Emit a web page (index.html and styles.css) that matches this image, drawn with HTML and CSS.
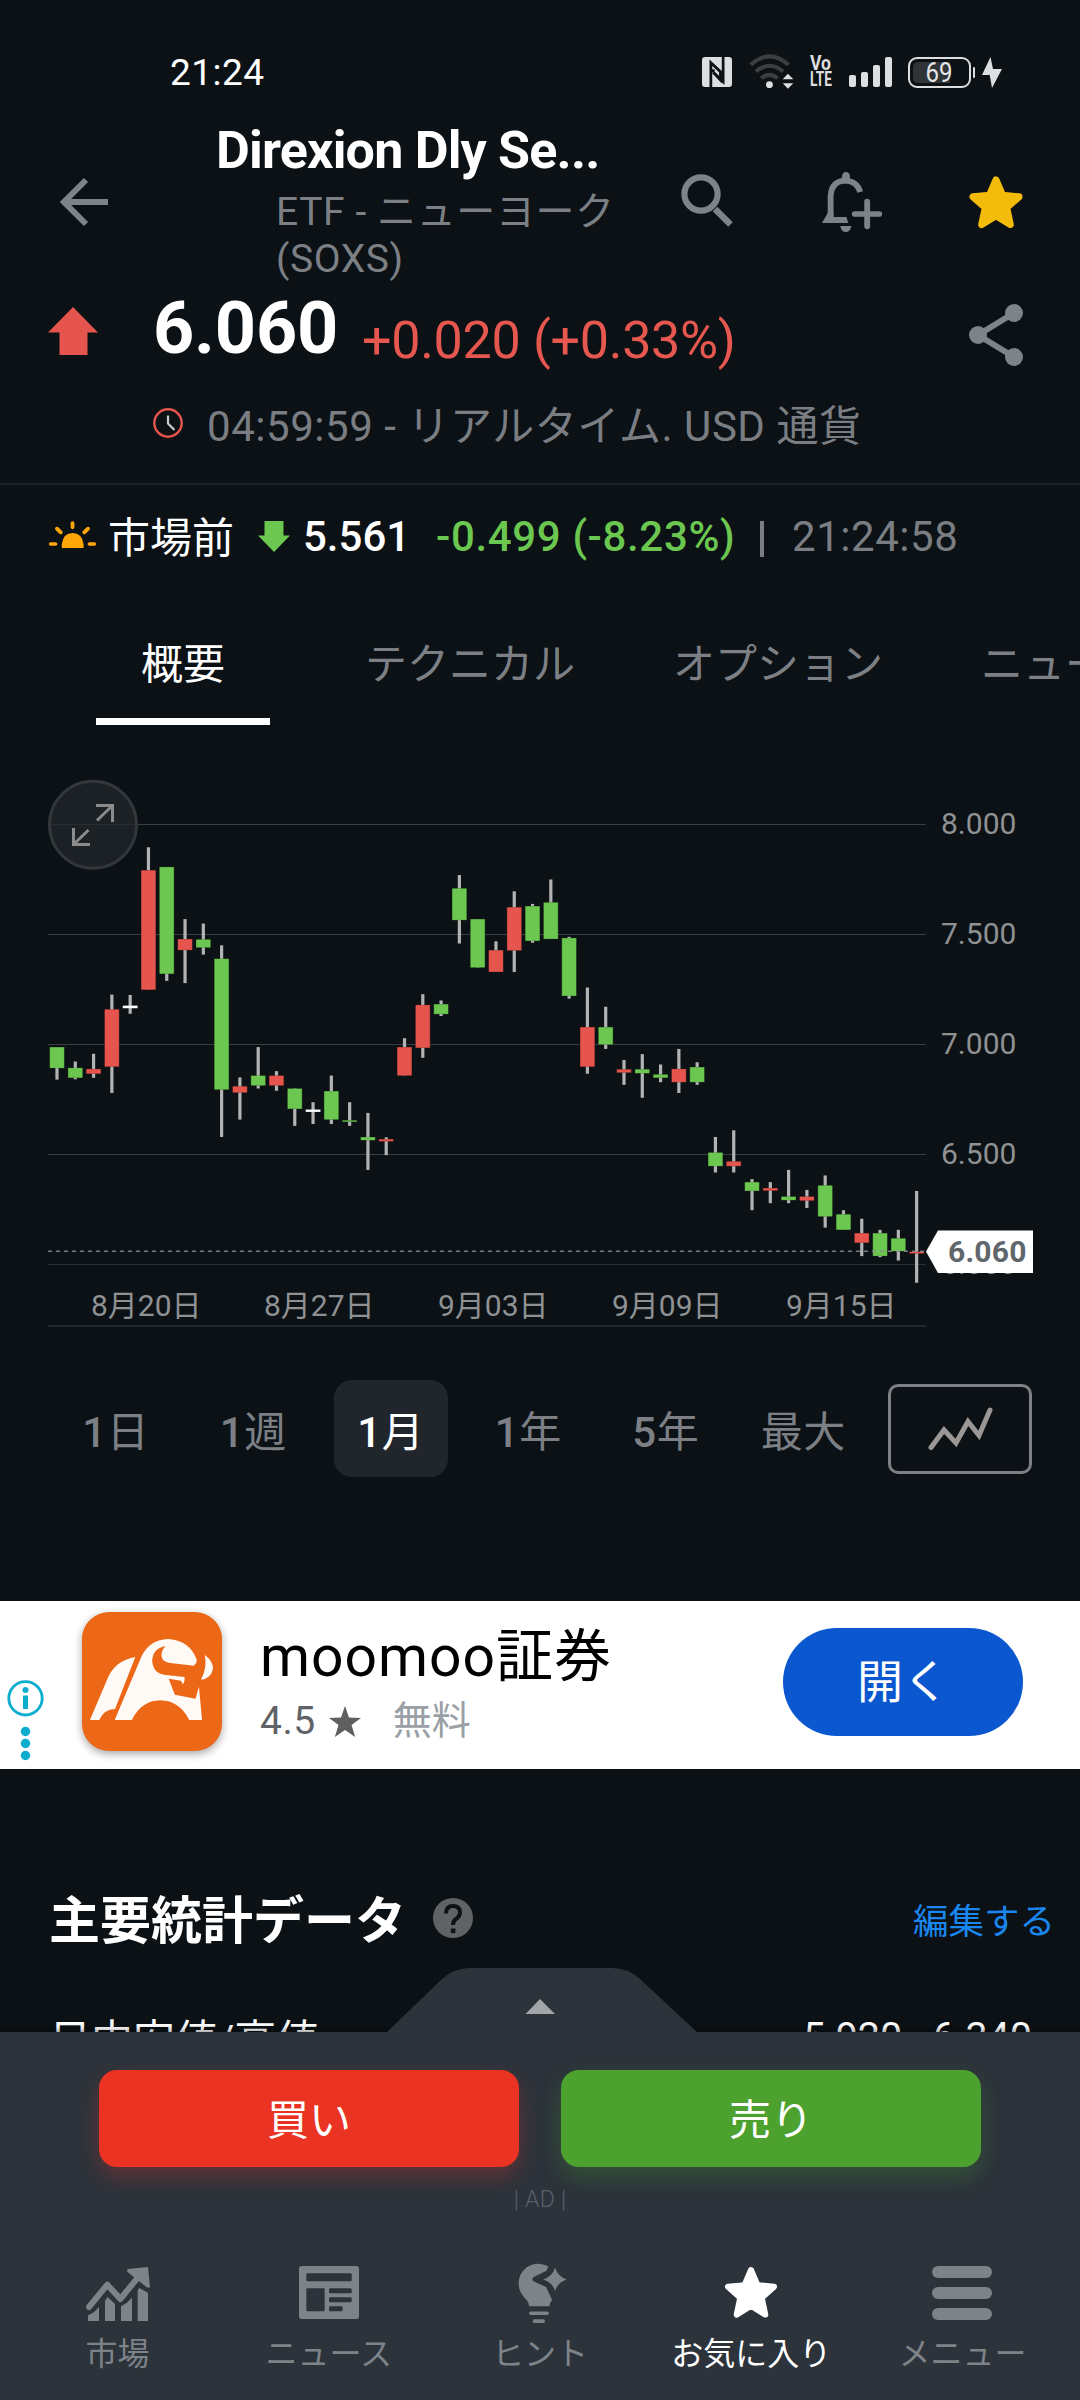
FILE: index.html
```html
<!DOCTYPE html>
<html lang="ja">
<head>
<meta charset="utf-8">
<title>SOXS</title>
<link rel="stylesheet" href="styles.css">
</head>
<body>
<main class="screen">
  <div class="status">
    <span class="clock">21:24</span>
    <div class="status-icons">
      <svg class="nfc" viewBox="470 81 88 90" preserveAspectRatio="none"><rect x="470" y="81" width="88" height="90" rx="9" fill="#dcdedf"/><path d="M496 171V98L524 125V150L503 127M503 127V118M532 81V155L504 127" fill="none" stroke="#0b1115" stroke-width="8"/></svg>
      <svg class="wifi" viewBox="606 72 132 104" preserveAspectRatio="none"><g fill="none" stroke="#3b3e40" stroke-width="12"><path d="M611 104Q666 54 722 104"/><path d="M626 124Q666 90 706 124"/><path d="M642 144Q666 124 690 144"/></g><ellipse cx="666" cy="163" rx="10" ry="10" fill="#dcdedf"/><path d="M705 147L720 131L736 147ZM705 159H736L720 175Z" fill="#dcdedf"/></svg>
      <svg class="volte" viewBox="0 0 23 32"><text x="0" y="14.500" textLength="21" lengthAdjust="spacingAndGlyphs">Vo</text><text x="0" y="31" textLength="22" lengthAdjust="spacingAndGlyphs">LTE</text></svg>
      <svg class="signal" viewBox="0 0 43 30"><g fill="#dcdedf"><rect y="18" width="7" height="12" rx="2"/><rect x="12" y="15" width="7" height="15" rx="2"/><rect x="24" y="8" width="7" height="22" rx="2"/><rect x="36" width="7" height="30" rx="2"/></g></svg>
      <svg class="battery" viewBox="0 0 67 31"><rect x="1" y="1" width="61" height="29" rx="8" fill="none" stroke="#dcdedf" stroke-width="2"/><path d="M10 5H42V26H10Q5 26 5 20V11Q5 5 10 5Z" fill="#303436"/><rect x="65" y="10" width="2" height="11" rx="1" fill="#dcdedf"/><text x="17.500" y="25" textLength="27" lengthAdjust="spacingAndGlyphs">69</text></svg>
      <svg class="bolt" viewBox="0 0 20 31"><path d="M8.500 0L0 18H7.500V17L10 31L20 12H11Z" fill="#dcdedf"/></svg>
    </div>
  </div>

  <header class="header">
    <svg class="back" viewBox="0 0 48 48"><path d="M48 24H5M26 2L4 24L26 46" fill="none" stroke="#7d8389" stroke-width="6"/></svg>
    <div class="titles">
      <h1>Direxion Dly Se...</h1>
      <p>ETF - ニューヨーク<br>(SOXS)</p>
    </div>
    <svg class="search" viewBox="0 0 53 53"><circle cx="20" cy="20" r="16.600" fill="none" stroke="#7d8389" stroke-width="6.200"/><path d="M34 35L49.500 50.500" stroke="#7d8389" stroke-width="6.500"/></svg>
    <svg class="bell" viewBox="819 426 174 180" preserveAspectRatio="none"><path d="M844 570V500Q846 452 888 452Q920 454 930 486" fill="none" stroke="#7d8389" stroke-width="17"/><path d="M877 448V438Q879 426 888 426Q899 427 900 438V448ZM836 548L819 579H895L890 561H852V548ZM872 588H904Q901 606 888 606Q875 606 872 588Z" fill="#7d8389"/><path d="M950 515V589M914 552H985" stroke="#7d8389" stroke-width="17" stroke-linecap="round"/></svg>
    <svg class="fav" viewBox="0 0 54 53"><path d="M27 4L33.500 19.200L50 20.800L37.700 31.700L41.300 48.600L27 39.800L12.700 48.600L16.300 31.700L4 20.800L20.500 19.200Z" fill="#f3bc0b" stroke="#f3bc0b" stroke-width="7" stroke-linejoin="round"/></svg>
  </header>

  <section class="quote">
    <svg class="up" viewBox="0 0 50 48"><path d="M25 0L50 25.500H39.500V48H11.500V25.500H0Z" fill="#e5544d"/></svg>
    <span class="price">6.060</span>
    <span class="change">+0.020 (+0.33%)</span>
    <svg class="share" viewBox="0 0 54 62"><path d="M45 9L9 31L45 53" fill="none" stroke="#7d8389" stroke-width="6"/><g fill="#7d8389"><circle cx="45" cy="9" r="9"/><circle cx="9" cy="31" r="9"/><circle cx="45" cy="53" r="9"/></g></svg>
  </section>
  <div class="timing">
    <svg viewBox="0 0 30 30"><circle cx="15" cy="15" r="13.700" fill="none" stroke="#e5544d" stroke-width="2.400"/><path d="M15 7.500V15.500L21.500 22" fill="none" stroke="#c8cacb" stroke-width="2.200"/></svg>
    <span>04:59:59 - リアルタイム. USD 通貨</span>
  </div>

  <div class="premarket">
    <svg class="sun" viewBox="143 723 136 81" preserveAspectRatio="none"><path d="M180 804V793Q184 759 211 759Q240 760 243 793V804Z" fill="#ffa708"/><path d="M211 729V742M166 746L177 757M256 746L245 757M148 792H162M260 792H274" stroke="#ffa708" stroke-width="11" stroke-linecap="round"/></svg>
    <span class="pm-label">市場前</span>
    <svg class="down" viewBox="0 0 32 31"><path d="M6.500 0H25.500V14.500H32L16 31L0 14.500H6.500Z" fill="#6cc750"/></svg>
    <span class="pm-price">5.561</span>
    <span class="pm-change">-0.499 (-8.23%)</span>
    <i class="pm-bar"></i>
    <span class="pm-time">21:24:58</span>
  </div>

  <nav class="tabs"><a class="on">概要</a><a>テクニカル</a><a>オプション</a><a>ニュース</a></nav>

  <svg class="chart" id="chart" viewBox="0 770 1080 570">
    <g id="grid"></g>
    <g class="axis">
      <text x="941" y="833.500">8.000</text><text x="941" y="943.500">7.500</text><text x="941" y="1053.500">7.000</text><text x="941" y="1164">6.500</text><text x="941" y="1273.800">6.000</text>
      <text x="91" y="1316">8月20日</text><text x="264" y="1316">8月27日</text><text x="438" y="1316">9月03日</text><text x="612" y="1316">9月09日</text><text x="786" y="1316">9月15日</text>
    </g>
    <g id="candles"></g>
    <path d="M48 1251.300H926" stroke="#8b9094" stroke-opacity=".85" stroke-width="1.600" stroke-dasharray="4 4"/>
    <path d="M926 1251.500L938 1230.500H1033V1273H938Z" fill="#fff"/>
    <text class="tag" x="948" y="1262">6.060</text>
    <circle cx="93" cy="824.700" r="43.500" fill="#24282c" fill-opacity=".7" stroke="#32373b" stroke-width="3"/>
    <path d="M96 805.500H112.500V822M112 806L97 820.500M73.500 828V844.500H90M74 844L88.500 830" fill="none" stroke="#8b8b8b" stroke-width="3"/>
  </svg>

  <div class="periods">
    <a><b>1</b>日</a><a><b>1</b>週</a><a class="on"><b>1</b>月</a><a><b>1</b>年</a><a><b>5</b>年</a><a>最大</a>
    <button class="kind"><svg viewBox="0 0 66 46"><path d="M4 41.500L17 24L29 37L41 15.500L52 29.500L63 4" fill="none" stroke="#9a9796" stroke-width="5" stroke-linecap="round"/></svg></button>
  </div>

  <section class="ad">
    <svg class="adinfo" viewBox="0 0 37 84"><circle cx="18.500" cy="18.300" r="16.700" fill="none" stroke="#0badcf" stroke-width="2.800"/><g fill="#0badcf"><circle cx="18.500" cy="10" r="3"/><rect x="16" y="15.500" width="5" height="13.500"/><circle cx="18.500" cy="51.500" r="4.700"/><circle cx="18.500" cy="63.500" r="4.700"/><circle cx="18.500" cy="75.500" r="4.700"/></g></svg>
    <svg class="logo" viewBox="238 96 407 417" preserveAspectRatio="none"><rect x="238" y="96" width="407" height="417" rx="80" fill="#ec6716"/><g fill="#fffaf5"><path d="M261 420L309 304Q330 242 393 231L334 387Q301 388 288 420Z"/><path d="M333 420L405 244Q428 178 490 177Q552 182 572 240Q568 262 552 256L500 250Q471 248 469 228Q469 210 481 198Q443 206 442 243Q445 282 482 285L536 291Q538 304 531 313L526 302L490 296L508 344L568 356L578 320L587 420H550Q521 362 466 361Q410 362 383 420Z"/><path d="M595 225Q618 242 619 265Q614 297 584 299Q603 262 595 225Z"/></g></svg>
    <div class="adtext">
      <strong>moomoo証券</strong>
      <p><span>4.5</span><svg viewBox="0 0 32 31"><path d="M16 0L20 11.500L32 12L22.500 19L26.200 31L16 24L5.800 31L9.500 19L0 12L12 11.500Z" fill="#5f5f5f"/></svg><em>無料</em></p>
    </div>
    <button class="open">開く</button>
  </section>

  <section class="stats">
    <div class="stats-head">
      <h2>主要統計データ</h2>
      <svg viewBox="0 0 40 40"><circle cx="20" cy="20" r="20" fill="#5f6366"/><path d="M13 15.500Q13 8 20 8Q27 8 27 14.500Q27 18.500 23 21Q20 23 20 27" fill="none" stroke="#0c1216" stroke-width="4"/><rect x="17.800" y="30.500" width="4.600" height="4.600" fill="#0c1216"/></svg>
      <a>編集する</a>
    </div>
    <div class="stats-row"><span>日中安値/高値</span><b>5.920 - 6.340</b></div>
  </section>

  <footer class="dock">
    <svg class="handle" viewBox="0 0 316 66"><path d="M0 66L3 64L58 11Q70 0 86 0H228Q244 0 256 11L313 64L316 66Z" fill="#2c333b"/><path d="M141.500 46L156 31L171 46Z" fill="#a2a6a9"/></svg>
    <div class="trade"><button class="buy">買い</button><button class="sell">売り</button></div>
    <div class="adlabel">| AD |</div>
    <nav class="bottom">
      <a><span class="ico"><svg width="66" height="56" viewBox="45 45 198 168"><g fill="#7d8389"><path d="M54 210V193Q72 186 87 168V210ZM105 210V149L113 138L135 159V210ZM153 210V166Q172 157 186 140V210ZM203 210V118L208 111L234 125V210Z"/><path d="M57 168L112 101L151 144L205 78" fill="none" stroke="#7d8389" stroke-width="18" stroke-linecap="round" stroke-linejoin="round"/><path d="M172 54L234 48L240 109L232 110L172 62Z"/></g></svg></span>市場</a>
      <a><span class="ico"><svg width="60" height="53" viewBox="687 50 180 159"><rect x="687" y="50" width="180" height="159" rx="8" fill="#7d8389"/><g fill="#2c333b"><rect x="709" y="72" width="136" height="24" rx="3"/><rect x="709" y="117" width="55" height="69" rx="3"/><rect x="777" y="117" width="68" height="15" rx="4"/><rect x="777" y="144" width="68" height="15" rx="4"/><rect x="777" y="171" width="41" height="15" rx="4"/></g></svg></span>ニュース</a>
      <a><span class="ico hint"><svg width="49" height="61" viewBox="1345 37 148 183"><path d="M1437 46Q1400 29 1370 50Q1340 76 1349 114Q1354 131 1371 148Q1378 155 1378 167H1440Q1440 157 1448 148L1430 109L1393 92Q1383 86 1394 78L1431 60ZM1457 50Q1465 77 1492 86Q1465 95 1457 121Q1449 95 1421 86Q1449 77 1457 50Z" fill="#7d8389"/><path d="M1384 188H1433M1395 212H1421" stroke="#7d8389" stroke-width="11" stroke-linecap="round"/></svg></span>ヒント</a>
      <a class="on"><span class="ico"><svg width="54" height="53" viewBox="0 0 54 53"><path d="M27 4L33.500 19.200L50 20.800L37.700 31.700L41.300 48.600L27 39.800L12.700 48.600L16.300 31.700L4 20.800L20.500 19.200Z" fill="#fff" stroke="#fff" stroke-width="6" stroke-linejoin="round"/></svg></span>お気に入り</a>
      <a><span class="ico"><svg width="60" height="54" viewBox="0 0 60 54"><g fill="#7d8389"><rect width="60" height="12" rx="6"/><rect y="21" width="60" height="12" rx="6"/><rect y="42" width="60" height="12" rx="6"/></g></svg></span>メニュー</a>
    </nav>
  </footer>
</main>
<script src="chart.js"></script>
</body>
</html>
```
FILE: styles.css
```css
* { box-sizing: border-box; }
body { margin: 0; background: #0b1115; }
.screen {
  position: relative;
  width: 1080px;
  height: 2400px;
  overflow: hidden;
  background: #0b1115;
  color: #fff;
  font-family: Roboto, "Noto Sans CJK JP", sans-serif;
  font-size: 42px;
}
svg { display: block; flex: none; overflow: visible; }
h1, h2, p { margin: 0; }
button { border: 0; padding: 0; color: #fff; font: inherit; }

.status { display: flex; height: 121px; padding: 54px 78px 0 170px; justify-content: space-between; }
.clock { font-size: 37px; line-height: 38px; letter-spacing: .5px; }
.status-icons { display: flex; height: 34px; align-items: center; }
.nfc { width: 30px; height: 30px; margin: 2px 17px 0 0; }
.wifi { width: 45px; height: 35px; margin-right: 16px; }
.volte { width: 23px; height: 32px; margin: 0 16px 0 0; fill: #dcdedf; font-size: 20px; font-weight: 700; }
.signal { width: 43px; height: 30px; margin: 2px 16px 0 0; }
.battery { width: 67px; height: 31px; margin: 2px 7px 0 0; fill: #e4e5e6; font-size: 27px; }
.bolt { width: 20px; height: 31px; margin-top: 2px; }

.header { display: flex; height: 164px; padding: 0 57px 0 60px; }
.back { width: 48px; height: 48px; margin: 57px 108px 0 0; }
.titles { width: 465px; }
.titles h1 { font-size: 52px; line-height: 60px; font-weight: 700; letter-spacing: -.8px; white-space: nowrap; }
.titles p { margin: 8px 0 0 60px; color: #7c8085; font-size: 39px; line-height: 47px; letter-spacing: .6px; white-space: nowrap; }
.search { width: 53px; height: 53px; margin: 53px 88px 0 0; }
.bell { width: 60px; height: 60px; margin: 51px 87px 0 0; }
.fav { width: 54px; height: 53px; margin-top: 55px; }

.quote { display: flex; height: 101px; padding: 0 57px 0 48px; }
.up { width: 50px; height: 48px; margin: 22px 55px 0 0; }
.price { width: 209px; font-size: 72px; font-weight: 700; line-height: 88px; letter-spacing: -.2px; }
.change { flex: 1; margin-top: 12px; color: #e5574f; font-size: 52px; line-height: 88px; letter-spacing: -.28px; white-space: nowrap; }
.share { width: 54px; height: 62px; margin-top: 19px; }
.timing { display: flex; height: 99px; padding: 22px 0 0 153px; color: #7a7e83; line-height: 37px; letter-spacing: .55px; border-bottom: 2px solid #1d2226; white-space: nowrap; }
.timing svg { width: 30px; height: 30px; margin-right: 24px; }

.premarket { display: flex; height: 135px; padding-left: 49px; line-height: 104px; white-space: nowrap; }
.sun { width: 47px; height: 27px; margin: 36px 12px 0 0; }
.pm-label { width: 150px; margin-top: 2px; }
.down { width: 32px; height: 31px; margin: 36px 13px 0 0; }
.pm-price { width: 133px; font-weight: 500; }
.pm-change { width: 324px; font-weight: 500; letter-spacing: .65px; color: #6cc750; }
.pm-bar { width: 4px; height: 36px; margin: 36px 28px 0 0; background: #7a7e83; }
.pm-time { color: #7a7e83; letter-spacing: .55px; }

.tabs { display: flex; height: 150px; padding-left: 96px; overflow: hidden; color: #7c8085; white-space: nowrap; }
.tabs a { flex: none; height: 105px; margin-right: 98px; line-height: 90px; }
.tabs .on { width: 174px; margin-right: 95px; border-bottom: 7px solid #fff; color: #fff; text-align: center; }

.chart { width: 1080px; height: 570px; }
.axis { fill: #8f9193; font-size: 30px; }
.tag { fill: #5f666c; font-size: 30px; font-weight: 700; letter-spacing: .2px; }

.periods { display: flex; height: 261px; padding: 40px 48px 0 47px; color: #7c8085; }
.periods a { height: 97px; margin: 0 12px; flex: 0 0 113.500px; border-radius: 18px; text-align: center; line-height: 106px; letter-spacing: .5px; }
.periods b { font-weight: 500; }
.periods .on { background: #20262c; color: #fff; }
.kind { display: flex; width: 144px; height: 90px; margin: 4px 0 0 auto; border: 3px solid #7d8185; border-radius: 10px; background: none; align-items: center; justify-content: center; }
.kind svg { width: 66px; height: 46px; }

.ad { display: flex; height: 168px; background: #fff; padding: 0 57px 0 7px; }
.adinfo { width: 37px; height: 84px; margin: 79px 38px 0 0; }
.logo { width: 140px; height: 139px; margin: 11px 38px 0 0; filter: drop-shadow(0 3px 4px rgba(0,0,0,.35)); }
.adtext { flex: 1; color: #000; }
.adtext strong { display: block; margin-top: 20px; height: 71px; font-size: 57px; line-height: 71px; font-weight: 400; letter-spacing: 1px; white-space: nowrap; }
.adtext p { display: flex; height: 58px; align-items: center; color: #5f6368; font-size: 39px; line-height: 58px; letter-spacing: .5px; }
.adtext p svg { width: 32px; height: 31px; margin: 0 32px 0 13px; }
.adtext em { font-style: normal; color: #9aa0a6; letter-spacing: 0; }
.open { width: 240px; height: 108px; margin-top: 27px; border-radius: 54px; background: #0b57d0; font-size: 46px; line-height: 108px; }

.stats-head { display: flex; height: 220px; padding: 109px 25px 0 49px; line-height: 88px; }
.stats-head h2 { width: 384px; font-size: 51px; font-weight: 700; white-space: nowrap; }
.stats-head svg { width: 40px; height: 40px; margin-top: 20px; }
.stats-head a { margin-left: auto; color: #1a86f0; font-size: 35.500px; }
.stats-row { display: flex; padding: 18px 48px 0 49px; justify-content: space-between; line-height: 60px; }
.stats-row span { margin-top: 4px; }
.stats-row b { font-size: 39.500px; font-weight: 400; }

.dock { position: absolute; left: 0; bottom: 0; width: 1080px; height: 368px; background: #2c333b; box-shadow: 0 0 8px rgba(0,0,0,.6); }
.handle { position: absolute; left: 384px; top: -64px; width: 316px; height: 66px; }
.trade { display: flex; height: 135px; padding: 38px 99px 0; gap: 42px; }
.trade button { flex: 1; height: 97px; border-radius: 18px; line-height: 102px; }
.buy { background: #ea3323; box-shadow: 0 10px 22px rgba(234,51,35,.28); }
.sell { background: #4da12e; box-shadow: 0 10px 22px rgba(77,161,46,.28); }
.adlabel { height: 64px; line-height: 66px; color: #59616a; font-size: 23px; font-weight: 300; text-align: center; letter-spacing: .3px; }
.bottom { display: flex; height: 169px; padding: 29px 12px 0; color: #7d8389; font-size: 32px; }
.bottom a { display: flex; flex: 1; flex-direction: column; align-items: center; line-height: 52px; white-space: nowrap; }
.bottom .on { color: #fff; }
.ico { display: flex; height: 68px; padding-top: 6px; align-items: flex-start; }
.ico.hint { padding: 3px 0 0 5px; }
```
FILE: chart.js
```js
// Each row: slot, kind, body top, body bottom, wick top, wick bottom.
// Vertical values are chart units: 595 per 1.000 of price.
const UNIT = 0.36995;
const ORIGIN = 760;
const STEP = 18.29;
const FILL = { g: '#6cc750', r: '#e5544d', w: '#ffffff' };
const EDGE = { g: '#3f7f2d', r: '#93352f', w: '#ffffff' };
const rows = [
  [0,'g',776,833,776,864],[1,'g',832,859,815,863],[2,'r',835,848,794,859],[3,'r',674,829,634,900],
  [4,'w',664,671,635,686],[5,'r',298,621,236,621],[6,'g',289,578,289,597],[7,'r',484,514,430,603],
  [8,'g',485,507,442,526],[9,'g',537,891,501,1019],[10,'r',882,899,858,972],[11,'g',853,880,776,888],
  [12,'r',853,880,841,894],[13,'g',888,943,888,989],[14,'w',945,951,925,984],[15,'g',895,972,853,984],
  [16,'g',974,978,925,989],[17,'g',1019,1028,954,1108],[18,'r',1025,1031,1020,1068],[19,'r',776,853,752,853],
  [20,'r',662,778,633,805],[21,'g',660,687,650,692],[22,'g',347,433,311,496],[23,'g',430,561,430,561],
  [24,'r',514,573,490,573],[25,'r',398,515,355,573],[26,'g',395,489,389,494],[27,'g',385,484,323,484],
  [28,'g',481,638,478,645],[29,'r',722,829,615,848],[30,'g',722,769,667,781],[31,'r',836,845,811,878],
  [32,'g',836,847,795,913],[33,'g',850,859,823,871],[34,'r',835,871,781,900],[35,'g',830,871,817,878],
  [36,'g',1061,1098,1019,1115],[37,'r',1085,1098,1001,1115],[38,'g',1141,1165,1133,1217],[39,'r',1157,1164,1141,1198],
  [40,'g',1180,1190,1108,1198],[41,'r',1180,1191,1162,1211],[42,'g',1150,1234,1123,1264],[43,'g',1228,1270,1217,1270],
  [44,'r',1279,1305,1240,1341],[45,'g',1279,1341,1270,1344],[46,'g',1293,1328,1270,1353],[47,'r',1329,1334,1165,1413]
];
const y = v => ORIGIN + v * UNIT;
const rect = (x, top, w, h, attrs) => `<rect x="${x.toFixed(2)}" y="${top.toFixed(2)}" width="${w}" height="${h.toFixed(2)}" ${attrs}/>`;

document.getElementById('candles').innerHTML = rows.map(([i, k, t, b, wt, wb]) => {
  const cx = 57 + i * STEP;
  return rect(cx - 1.6, y(wt), 3.2, (wb - wt) * UNIT, 'fill="#b3b3b3"') +
    rect(cx - 7.4, y(t), 14.8, (b - t) * UNIT, `fill="${EDGE[k]}"`) +
    rect(cx - 6.9, y(t) + 0.3, 13.8, Math.max((b - t) * UNIT - 0.6, 0.6), `fill="${FILL[k]}"`);
}).join('');

document.getElementById('grid').innerHTML =
  [174, 471, 769, 1066].map(v => rect(48, Math.floor(y(v)), 878, 1, 'fill="#373f43"')).join('') +
  rect(48, 1264, 878, 1, 'fill="#2c3236"') +
  rect(48, 1325, 878, 2, 'fill="#22282d"');
```
